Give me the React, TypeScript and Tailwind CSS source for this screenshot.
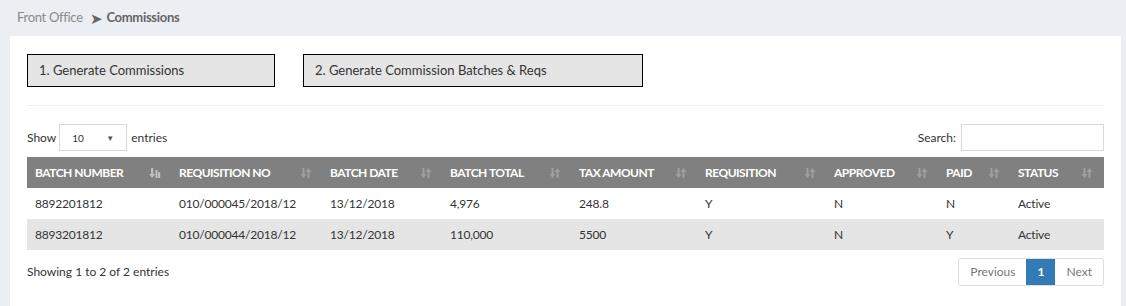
import React from 'react';

type Row = {
  batch: string;
  req: string;
  date: string;
  total: string;
  tax: string;
  requisition: string;
  approved: string;
  paid: string;
  status: string;
};

const columns = [
  { label: 'BATCH NUMBER', width: 'w-[144px]' },
  { label: 'REQUISITION NO', width: 'w-[151px]' },
  { label: 'BATCH DATE', width: 'w-[120px]' },
  { label: 'BATCH TOTAL', width: 'w-[129px]' },
  { label: 'TAX AMOUNT', width: 'w-[126px]' },
  { label: 'REQUISITION', width: 'w-[129px]' },
  { label: 'APPROVED', width: 'w-[112px]' },
  { label: 'PAID', width: 'w-[72px]' },
  { label: 'STATUS', width: 'w-[93px]' },
];

const rows: Row[] = [
  {
    batch: '8892201812',
    req: '010/000045/2018/12',
    date: '13/12/2018',
    total: '4,976',
    tax: '248.8',
    requisition: 'Y',
    approved: 'N',
    paid: 'N',
    status: 'Active',
  },
  {
    batch: '8893201812',
    req: '010/000044/2018/12',
    date: '13/12/2018',
    total: '110,000',
    tax: '5500',
    requisition: 'Y',
    approved: 'N',
    paid: 'Y',
    status: 'Active',
  },
];

// faded up/down arrows used on unsorted columns
const SortIcon = ({ active }: { active?: boolean }) => (
  <svg width="12" height="12" viewBox="0 0 12 12" className={active ? 'opacity-50' : 'opacity-25'}>
    {active ? (
      <g fill="#ffffff">
        <rect x="2" y="1" width="2.2" height="7" />
        <path d="M0 7 L6.2 7 L3.1 11 Z" />
        <rect x="6.5" y="3" width="2" height="8" />
        <rect x="9" y="5" width="2.2" height="6" />
      </g>
    ) : (
      <g fill="#ffffff">
        <rect x="2.5" y="1" width="2" height="7" />
        <path d="M0.5 7 L6.5 7 L3.5 11 Z" />
        <rect x="7.5" y="4" width="2" height="7" />
        <path d="M5.5 5 L11.5 5 L8.5 1 Z" />
      </g>
    )}
  </svg>
);

export default function App() {
  return (
    <div className="min-h-screen bg-[#ebeef3] font-['Lato',sans-serif] text-[#333] pr-[4px]">
      {/* Breadcrumb */}
      <div className="h-[36px] flex items-center pl-[17px] text-[13px] tracking-[-0.3px]">
        <span className="text-[#8a8a8a]">Front Office</span>
        <span className="text-[#666] ml-[7px] mr-[4px] text-[15px] leading-none">&#10148;</span>
        <span className="text-[#666] font-bold">Commissions</span>
      </div>

      {/* Panel */}
      <div className="bg-white ml-[10px] mr-[1px] px-[17px] pt-[18px] pb-[20px] min-h-[270px]">
        <div className="flex gap-[28px]">
          <button className="w-[248px] h-[33px] border border-black bg-[#e5e5e5] text-left pl-[11px] text-[13px] text-[#333]">
            1. Generate Commissions
          </button>
          <button className="w-[340px] h-[33px] border border-black bg-[#e5e5e5] text-left pl-[11px] text-[13px] text-[#333]">
            2. Generate Commission Batches &amp; Reqs
          </button>
        </div>

        <div className="border-t border-[#eeeeee] mt-[18px]" />

        {/* Show / Search */}
        <div className="flex items-center justify-between mt-[18px] text-[12px]">
          <div className="flex items-center">
            <span>Show</span>
            <div className="ml-[3px] mr-[4px] w-[68px] h-[27px] border border-[#d9d9d9] flex items-center justify-between px-[12px] text-[10px]">
              <span className="mt-[2px]">10</span>
              <span className="text-[8px] text-[#555]">&#9660;</span>
            </div>
            <span>entries</span>
          </div>
          <div className="flex items-center">
            <span className="mr-[5px]">Search:</span>
            <div className="w-[143px] h-[27px] border border-[#d7d9e0]" />
          </div>
        </div>

        {/* Table */}
        <div className="mt-[6px] text-[12px] tracking-[-0.2px]">
          <div className="flex bg-[#808080] h-[31px] items-center text-white font-bold">
            {columns.map((c, i) => (
              <div key={c.label} className={`${c.width} flex items-center justify-between pl-[8px] pr-[10px]`}>
                <span className="tracking-[-0.5px]">{c.label}</span>
                <SortIcon active={i === 0} />
              </div>
            ))}
          </div>
          {rows.map((r, idx) => (
            <div
              key={r.batch}
              className={`flex h-[31px] items-center ${idx % 2 === 1 ? 'bg-[#e5e5e5]' : 'bg-white'}`}
            >
              {[r.batch, r.req, r.date, r.total, r.tax, r.requisition, r.approved, r.paid, r.status].map((v, i) => (
                <div key={i} className={`${columns[i].width} pl-[8px]`}>
                  {v}
                </div>
              ))}
            </div>
          ))}
        </div>

        {/* Footer */}
        <div className="flex items-center justify-between mt-[8px] text-[12px]">
          <span>Showing 1 to 2 of 2 entries</span>
          <div className="flex h-[28px] border border-[#dddddd] rounded-[3px] overflow-hidden text-[12px]">
            <span className="px-[11px] flex items-center text-[#777]">Previous</span>
            <span className="w-[29px] flex items-center justify-center bg-[#337ab7] text-white font-bold">1</span>
            <span className="px-[11px] flex items-center text-[#777]">Next</span>
          </div>
        </div>
      </div>
    </div>
  );
}
